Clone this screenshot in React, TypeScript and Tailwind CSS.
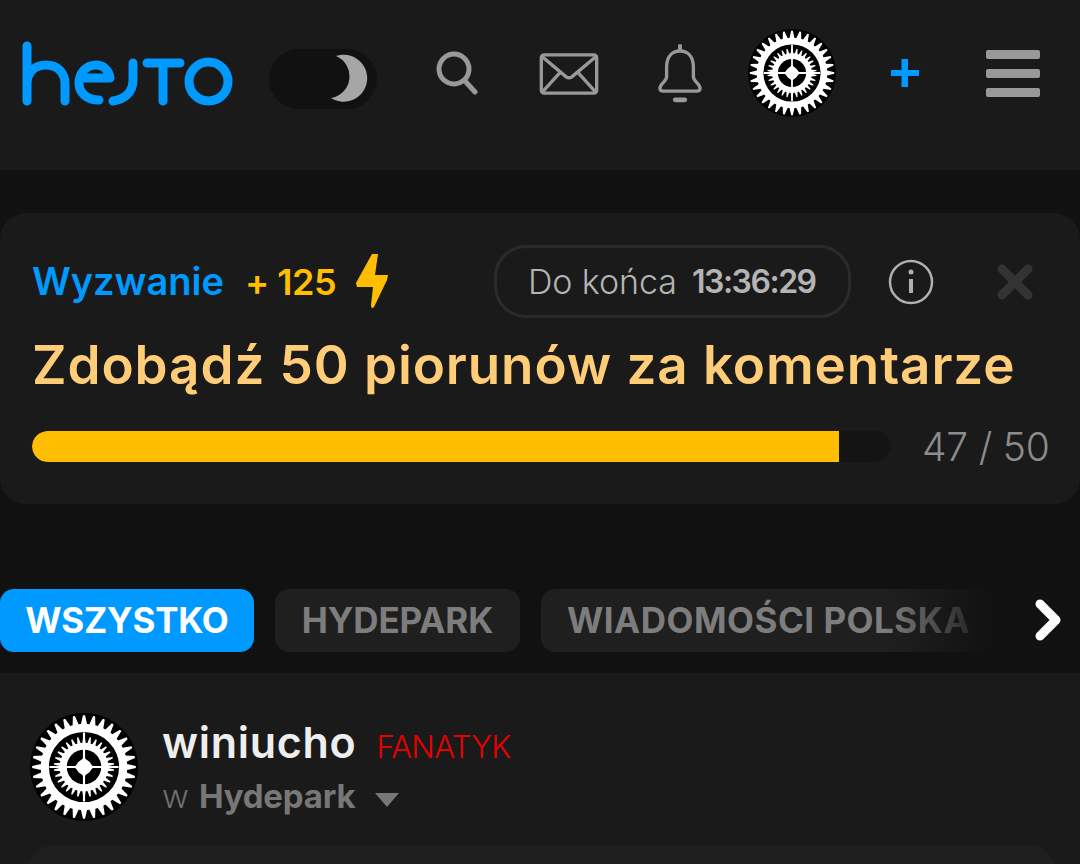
import React from 'react';

const sans = "font-['Inter','Open_Sans',sans-serif]";

// teeth ring used by the outer and the inner wheel of the avatar
const teeth = (count: number, outer: number, inner: number) => {
  const pts: string[] = [];
  for (let i = 0; i < count; i++) {
    const a = (i / count) * Math.PI * 2;
    const step = (Math.PI * 2) / count;
    [
      [a - step * 0.36, inner],
      [a - step * 0.1, outer],
      [a + step * 0.1, outer],
      [a + step * 0.36, inner],
    ].forEach(([t, r]) => {
      pts.push(`${(50 + Math.sin(t) * r).toFixed(2)},${(50 - Math.cos(t) * r).toFixed(2)}`);
    });
  }
  return pts.join(' ');
};

const GearAvatar = ({ className }: { className: string }) => (
  <svg viewBox="0 0 100 100" className={className}>
    <circle cx="50" cy="50" r="50" fill="#000" />
    <polygon points={teeth(32, 48, 40)} fill="#fff" />
    <circle cx="50" cy="50" r="32.500" fill="#000" />
    <polygon points={teeth(30, 28, 22)} fill="#fff" />
    <circle cx="50" cy="50" r="22.500" fill="#fff" />
    <circle cx="50" cy="50" r="16" fill="#000" />
    <path d="M50 18V82M18 50H82" stroke="#fff" strokeWidth="2" />
    <path d="M50 41L59 50L50 59L41 50Z" fill="#fff" />
    <circle cx="50" cy="50" r="7" fill="#fff" />
  </svg>
);

const Logo = () => (
  <svg width="212" height="66" viewBox="21 40 212 66" fill="none" stroke="#0099ff" strokeWidth="9" strokeLinecap="round" strokeLinejoin="round">
    <path d="M27 46V101M27 84C27 72 35 65 46 65C57 65 65 72 65 84V101" />
    <path d="M82 78H110C109 70 103 65 96 65C86 65 79 73 79 83C79 93 87 100 99 100" />
    <path d="M133 63V80C133 92 125 99 113 101" />
    <path d="M147 63H180M163 63V101" />
    <circle cx="208.500" cy="81.500" r="19.500" />
  </svg>
);

const Tab = ({ label, active, className }: { label: string; active?: boolean; className?: string }) => (
  <div
    className={`h-[63px] shrink-0 flex items-center justify-center rounded-[14px] text-[35px] font-bold whitespace-nowrap ${
      active ? 'bg-[#0099ff] text-white w-[254px]' : 'bg-[#1f1f1f] text-[#7d7d7d]'
    } ${className ?? ''}`}
  >
    {label}
  </div>
);

export default function App() {
  return (
    <div className={`w-[1080px] h-[864px] overflow-hidden bg-[#111111] ${sans}`}>
      {/* Header */}
      <header className="h-[170px] bg-[#1a1a1a] flex items-start pt-[29px] pl-[21px]">
        <div className="h-[88px] flex items-center">
          <Logo />
          <div className="ml-[36px] w-[108px] h-[60px] mt-[12px] rounded-full bg-[#111111] relative">
            <svg width="108" height="60" viewBox="269 49 108 60" className="absolute inset-0">
              <path d="M336 56A23.500 23.500 0 1 1 331 98A22 22 0 0 0 336 56Z" fill="#a6a6a6" />
            </svg>
          </div>
          <svg width="44" height="45" viewBox="0 0 44 45" fill="none" stroke="#999" className="ml-[58px] mt-[-1px]">
            <circle cx="19" cy="19" r="15" strokeWidth="5" />
            <path d="M30 31L40 42" strokeWidth="5" strokeLinecap="round" />
          </svg>
          <svg width="60" height="42" viewBox="0 0 62 44" fill="none" stroke="#999" strokeWidth="3.500" className="ml-[60px] mt-[2px]">
            <rect x="2" y="2" width="58" height="40" rx="3" />
            <path d="M3 4L28 25Q31 27 34 25L59 4M3 41L22 20M59 41L40 20" />
          </svg>
          <svg width="44" height="62" viewBox="0 0 46 62" fill="none" stroke="#999" strokeWidth="3.500" className="ml-[59px]">
            <path d="M23 1V8" strokeWidth="4" />
            <path d="M23 8C13 8 9 16 9 25V35C9 40 2 42 2 47C2 49 3 50 6 50H40C43 50 44 49 44 47C44 42 37 40 37 35V25C37 16 33 8 23 8Z" />
            <path d="M18 59H28" strokeWidth="5" strokeLinecap="round" />
          </svg>
          <GearAvatar className="w-[88px] h-[88px] ml-[46px] shrink-0" />
          <svg width="30" height="28" viewBox="0 0 30 28" fill="#0099ff" className="ml-[54px] mt-[-1px]">
            <path d="M11.500 0H18V11H29V17H18V28H11.500V17H1V11H11.500Z" />
          </svg>
          <div className="ml-[66px] w-[54px] flex flex-col gap-[10px]">
            <div className="h-[9px] rounded-[2px] bg-[#999999]" />
            <div className="h-[9px] rounded-[2px] bg-[#999999]" />
            <div className="h-[9px] rounded-[2px] bg-[#999999]" />
          </div>
        </div>
      </header>

      {/* Challenge card */}
      <section className="mt-[43px] h-[291px] bg-[#1a1a1a] rounded-[26px] pt-[32px] pl-[32px] pr-[32px]">
        <div className="h-[73px] flex items-center">
          <span className="text-[38px] font-semibold text-[#0099ff] w-[213px]">Wyzwanie</span>
          <span className="text-[36px] font-semibold text-[#ffbf00] tracking-[-0.5px] w-[111px] whitespace-nowrap">+ 125</span>
          <svg width="32" height="55" viewBox="0 0 32 55" fill="#ffbf00" className="shrink-0">
            <path d="M16 0L22 0L19 21H32L31 26L18 53Q15 56 15 51L17 33H1L0 29Z" />
          </svg>
          <div className="ml-[106px] w-[357px] h-[73px] shrink-0 rounded-[32px] border-[3px] border-[#2b2b2b] flex items-center pl-[31px] text-[#b4b4b4] whitespace-nowrap">
            <span className="font-light text-[34px] w-[164px] tracking-[-0.1px]">Do końca</span>
            <span className="font-semibold text-[32px] tracking-[-1.500px]">13:36:29</span>
          </div>
          <svg width="46" height="46" viewBox="0 0 46 46" fill="none" stroke="#b0b0b0" className="ml-[37px] shrink-0">
            <circle cx="23" cy="23" r="21" strokeWidth="2.500" />
            <path d="M23 20V34" strokeWidth="4" />
            <circle cx="23" cy="13" r="2.500" fill="#b0b0b0" stroke="none" />
          </svg>
          <svg width="36" height="36" viewBox="0 0 36 36" fill="none" stroke="#333333" strokeWidth="9" strokeLinecap="round" className="ml-[63px] shrink-0">
            <path d="M5 5L31 31M31 5L5 31" />
          </svg>
        </div>
        <h1 className="mt-[13px] text-[53px] leading-[68px] font-semibold text-[#ffcc77] whitespace-nowrap tracking-[0.900px]">
          Zdobądź 50 piorunów za komentarze
        </h1>
        <div className="mt-[32px] flex items-center">
          <div className="w-[858px] h-[31px] shrink-0 rounded-full bg-[#141414] overflow-hidden">
            <div className="w-[807px] h-full bg-[#ffbf00] rounded-l-full" />
          </div>
          <span className="ml-[32px] text-[39px] leading-[31px] text-[#8c8c8c] font-light whitespace-nowrap tracking-[-0.2px]">47 / 50</span>
        </div>
      </section>

      {/* Category tabs */}
      <nav className="mt-[85px] h-[63px] flex gap-[21px] relative overflow-hidden">
        <Tab label="WSZYSTKO" active className="tracking-[-0.2px]" />
        <div className="w-[245px] shrink-0"><Tab label="HYDEPARK" className="tracking-[-0.1px]" /></div>
        <div className="w-[455px] shrink-0"><Tab label="WIADOMOŚCI POLSKA" className="tracking-[0.5px]" /></div>
        <div className="absolute top-0 right-[84px] h-full w-[110px] bg-gradient-to-r from-transparent to-[#111111]" />
        <svg width="28" height="42" viewBox="0 0 28 42" fill="none" stroke="#fff" strokeWidth="9" strokeLinecap="round" strokeLinejoin="round" className="absolute right-[18px] top-[10px]">
          <path d="M6 5L22 21L6 37" />
        </svg>
      </nav>

      {/* Post */}
      <section className="mt-[21px] h-[191px] bg-[#1a1a1a] pt-[40px] pl-[30px]">
        <div className="flex">
          <GearAvatar className="w-[108px] h-[108px] shrink-0" />
          <div className="ml-[24px]">
            <div className="flex items-baseline h-[60px] mt-[-4px] pt-[1px] whitespace-nowrap">
              <span className="text-[43px] font-semibold text-[#eeeeee] tracking-[0.7px]">winiucho</span>
              <span className="ml-[20px] text-[31px] font-light text-[#e60000] tracking-[-0.7px]">FANATYK</span>
            </div>
            <div className="flex items-center h-[36px] mt-[10px] text-[33px] text-[#6e6e6e] whitespace-nowrap">
              <span className="font-light">w</span>
              <span className="ml-[10px] font-bold text-[#777777] tracking-[-0.2px]">Hydepark</span>
              <svg width="26" height="14" viewBox="0 0 26 14" fill="#777777" className="ml-[19px] mt-[6px]">
                <path d="M1 0H25L13 14Z" />
              </svg>
            </div>
          </div>
        </div>
        <div className="mt-[24px] mr-[25px] ml-[-2px] h-[60px] rounded-t-[26px] bg-[#1f1f1f]" />
      </section>
    </div>
  );
}
